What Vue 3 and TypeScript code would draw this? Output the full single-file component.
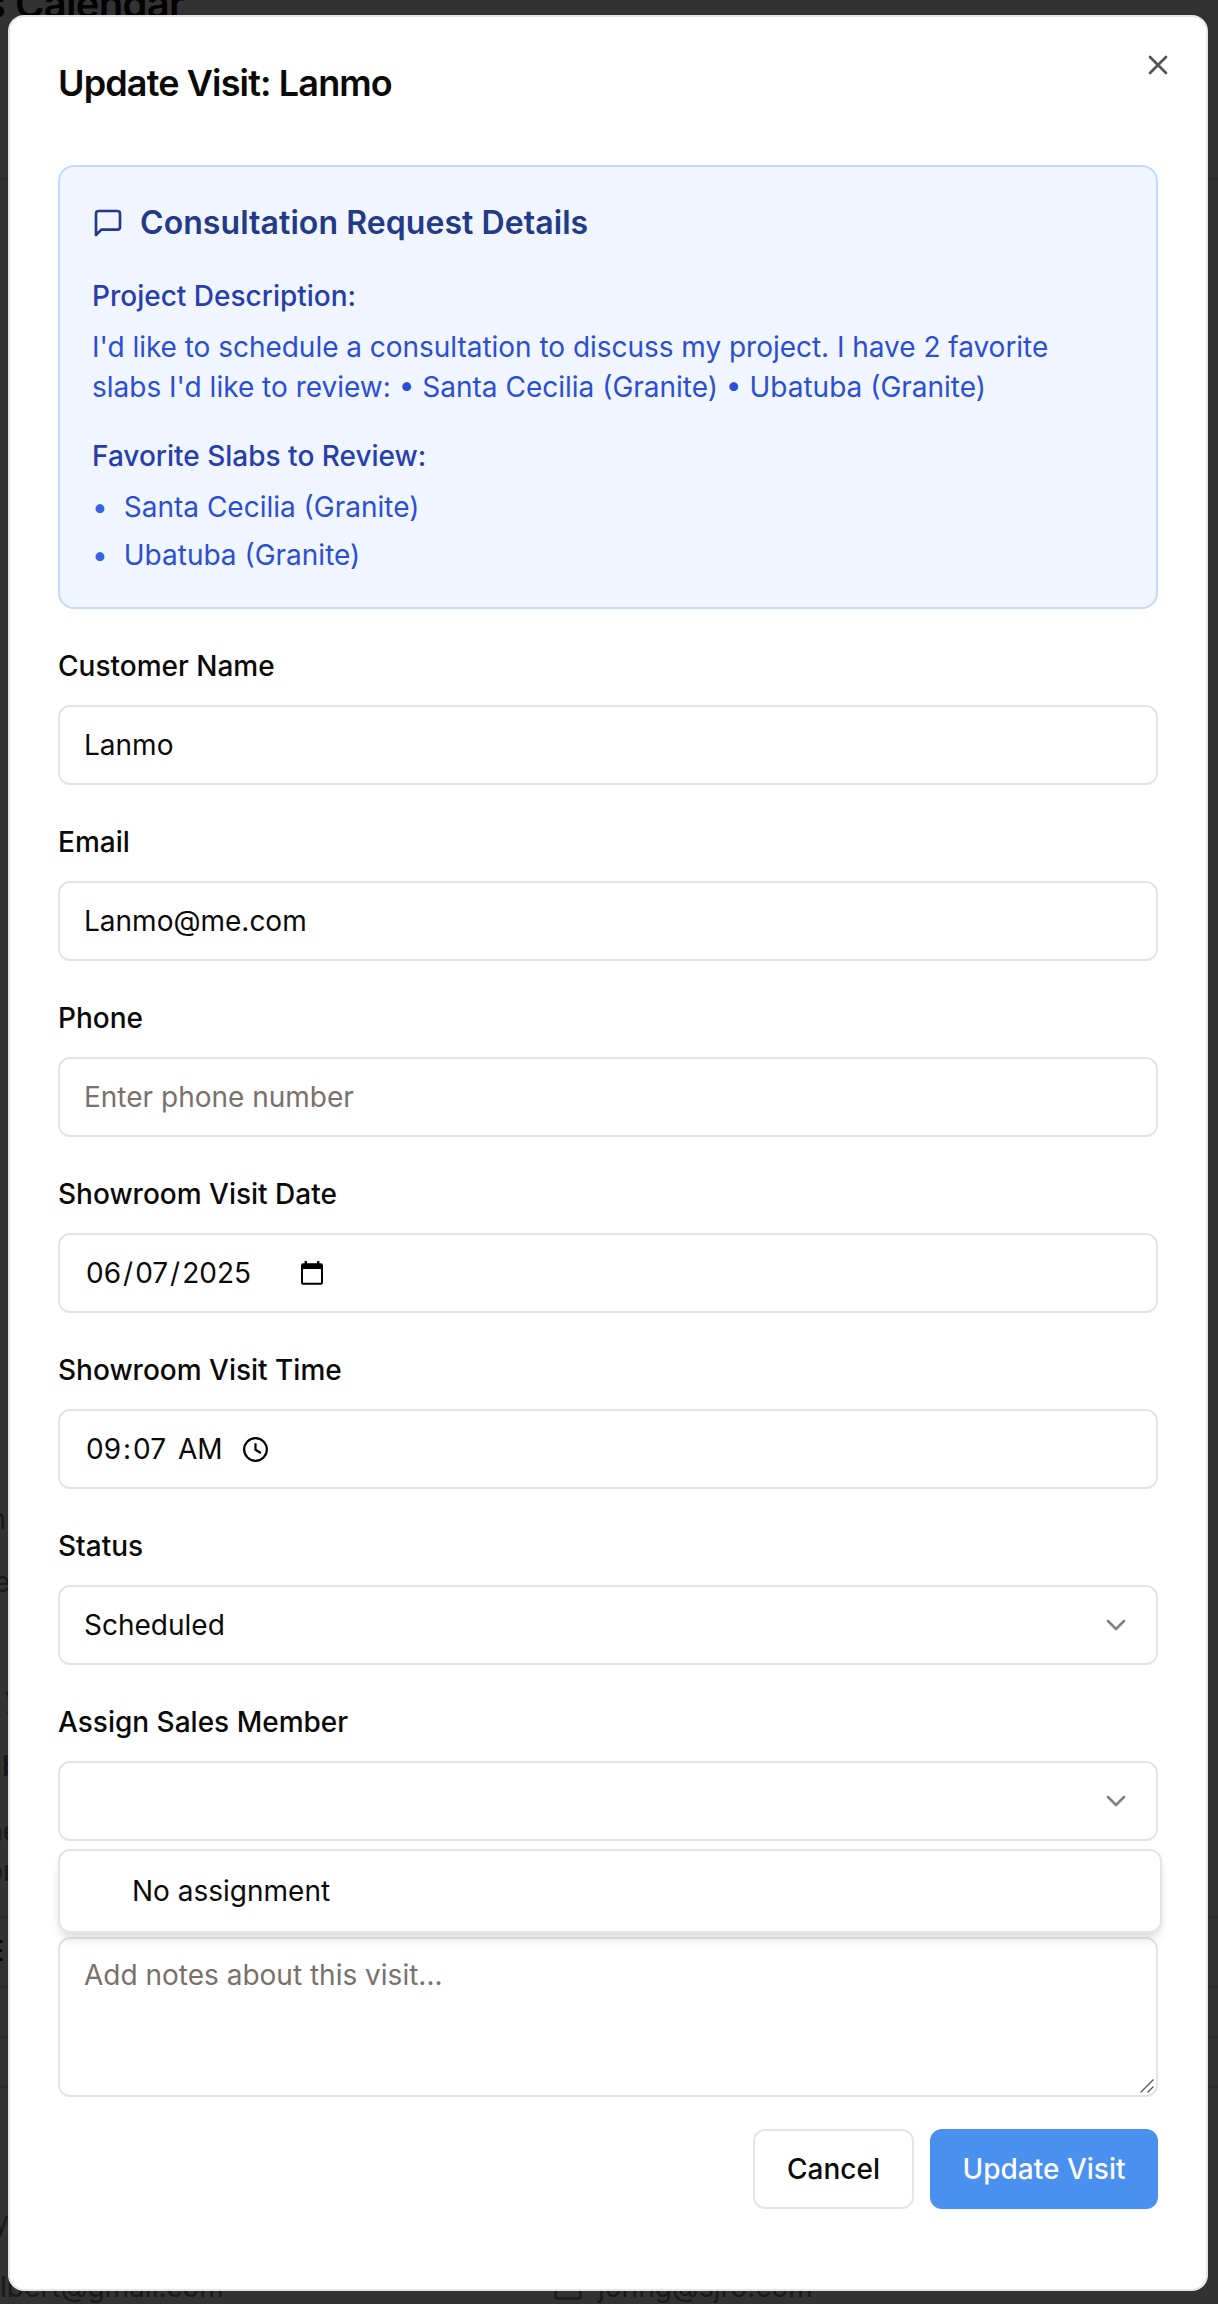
<script setup lang="ts">
interface Field {
  label: string
  value?: string
  parts?: string[]
  placeholder?: string
  kind: 'text' | 'date' | 'time' | 'select'
}

interface Fragment {
  text: string
  right?: number
  left?: number
  baseline: number
  size: number
  weight: number
  color: string
}

const fields: Field[] = [
  { label: 'Customer Name', value: 'Lanmo', kind: 'text' },
  { label: 'Email', value: 'Lanmo@me.com', kind: 'text' },
  { label: 'Phone', placeholder: 'Enter phone number', kind: 'text' },
  { label: 'Showroom Visit Date', parts: ['06', '/', '07', '/', '2025'], kind: 'date' },
  { label: 'Showroom Visit Time', parts: ['09', ':', '07', ' ', 'AM'], kind: 'time' },
  { label: 'Status', value: 'Scheduled', kind: 'select' },
]

const slabs: string[] = ['Santa Cecilia (Granite)', 'Ubatuba (Granite)']

// Pieces of the dimmed page that stay visible around the dialog
const fragments: Fragment[] = [
  { text: 's', right: 1213, baseline: 19, size: 40, weight: 600, color: '#020202' },
  { text: 'Calendar', left: 15, baseline: 19, size: 40, weight: 600, color: '#020202' },
  { text: 'n', right: 1212, baseline: 1530, size: 28, weight: 400, color: '#16181c' },
  { text: 'e', left: -6, baseline: 1593, size: 28, weight: 400, color: '#16181c' },
  { text: 'y', left: 5, baseline: 1709, size: 28, weight: 500, color: '#16181c' },
  { text: 'b', left: 2, baseline: 1777, size: 28, weight: 600, color: '#16181c' },
  { text: 'ne', left: -14, baseline: 1842, size: 28, weight: 500, color: '#16181c' },
  { text: 'or', left: -14, baseline: 1882, size: 28, weight: 500, color: '#16181c' },
  { text: 'E', left: -13, baseline: 1962, size: 28, weight: 600, color: '#020202' },
  { text: 'y', right: 1209, baseline: 2233, size: 28, weight: 400, color: '#16181c' },
  { text: 'lbert@gmail.com', left: 0, baseline: 2298, size: 28, weight: 400, color: '#16181c' },
  { text: 'johng@sjro.com', left: 598, baseline: 2298, size: 28, weight: 400, color: '#16181c' },
]

const rules: number[] = [178, 1916, 1986, 2036, 2086]
</script>

<template>
  <div class="page">
    <div class="backdrop" aria-hidden="true">
      <i v-for="y in rules" :key="y" class="rule" :style="{ top: y + 'px' }"></i>
      <span
        v-for="(f, i) in fragments"
        :key="i"
        class="fragment"
        :style="{
          left: f.left !== undefined ? f.left + 'px' : 'auto',
          right: f.right !== undefined ? f.right + 'px' : 'auto',
          top: f.baseline - f.size + 'px',
          fontSize: f.size + 'px',
          fontWeight: f.weight,
          letterSpacing: f.size > 30 ? '-0.7px' : '0',
          color: f.color,
        }"
      >{{ f.text }}</span>
      <i class="envelope"></i>
    </div>

    <main class="dialog">
      <button class="close" aria-label="Close">
        <svg viewBox="0 0 24 24" class="icon"><path d="M18 6 6 18M6 6l12 12" /></svg>
      </button>
      <h2 class="title">Update Visit: Lanmo</h2>

      <section class="panel">
        <h3 class="panel-title">
          <svg viewBox="0 0 24 24" class="icon">
            <path d="M21 15a2 2 0 0 1-2 2H7l-4 4V5a2 2 0 0 1 2-2h14a2 2 0 0 1 2 2z" />
          </svg>
          <span class="panel-title-text">Consultation Request Details</span>
        </h3>
        <h4 class="sub">Project Description:</h4>
        <p class="desc">
          I'd like to schedule a consultation to discuss my project. I have 2 favorite<br />slabs I'd like to
          review: • Santa Cecilia (Granite) • Ubatuba (Granite)
        </p>
        <h4 class="sub second">Favorite Slabs to Review:</h4>
        <ul class="slabs">
          <li v-for="s in slabs" :key="s"><span class="dot">•</span><span>{{ s }}</span></li>
        </ul>
      </section>

      <div v-for="f in fields" :key="f.label" class="field">
        <div class="label">{{ f.label }}</div>
        <div class="control" :class="f.kind">
          <span v-if="f.parts" class="parts"><span v-for="(p, i) in f.parts" :key="i" :class="i % 2 ? 'sep' : 'part'">{{ p }}</span></span>
          <span v-else-if="f.value" class="value">{{ f.value }}</span>
          <span v-else class="placeholder">{{ f.placeholder }}</span>
          <svg v-if="f.kind === 'date'" class="cal" viewBox="0 0 22 24">
            <path fill-rule="evenodd" d="M3.600 0h2.300v2.200h10.200V0h2.300v2.200h1.400A2.200 2.200 0 0 1 22 4.400v17.200a2.200 2.200 0 0 1-2.200 2.200H2.200A2.200 2.200 0 0 1 0 21.600V4.400A2.200 2.200 0 0 1 2.200 2.200h1.400zM2 8v13.800h18V8z" />
          </svg>
          <svg v-if="f.kind === 'time'" class="clock" viewBox="0 0 24 24">
            <circle cx="12" cy="12" r="10.900" /><path d="M12 6v6.300l5.200 3.100" />
          </svg>
          <svg v-if="f.kind === 'select'" class="icon chevron" viewBox="0 0 24 24"><path d="m6 9 6 6 6-6" /></svg>
        </div>
      </div>

      <div class="field">
        <div class="label">Assign Sales Member</div>
        <div class="control select">
          <span class="value"></span>
          <svg class="icon chevron" viewBox="0 0 24 24"><path d="m6 9 6 6 6-6" /></svg>
          <div class="menu">No assignment</div>
        </div>
      </div>

      <div class="notes">
        <span class="placeholder">Add notes about this visit...</span>
        <svg class="grip" viewBox="0 0 14 14"><path d="M.5 13.500 13.500.500M7.500 13.500l6-6" /></svg>
      </div>

      <footer class="actions">
        <button class="btn cancel">Cancel</button>
        <button class="btn primary">Update Visit</button>
      </footer>
    </main>
  </div>
</template>

<style>
html,
body {
  margin: 0;
  background: #323232;
}
</style>

<style scoped>
.page,
.page * {
  box-sizing: border-box;
}
.page {
  position: relative;
  width: 1218px;
  height: 2304px;
  padding: 15px 10px 13px 8px;
  overflow: hidden;
  background: #323232;
  color: #0c0a09;
  font-family: Inter, 'Liberation Sans', sans-serif;
  font-size: 28px;
  line-height: 40px;
}
.backdrop {
  position: absolute;
  inset: 0;
}
.fragment {
  position: absolute;
  line-height: 1.27;
  white-space: nowrap;
}
.rule {
  position: absolute;
  left: 0;
  right: 0;
  height: 2px;
  background: #2b2b2b;
}
.envelope {
  position: absolute;
  left: 554px;
  top: 2276px;
  width: 28px;
  height: 24px;
  border: 3px solid #1c1c1e;
  border-radius: 4px;
}
.dialog {
  position: relative;
  height: 2276px;
  padding: 48px;
  border: 2px solid #e5e5e5;
  border-radius: 16px;
  background: #fff;
}
.icon {
  width: 32px;
  height: 32px;
  flex: none;
  display: block;
  fill: none;
  stroke: currentColor;
  stroke-width: 2;
  stroke-linecap: round;
  stroke-linejoin: round;
}
.close {
  position: absolute;
  top: 32px;
  right: 32px;
  padding: 0;
  border: 0;
  background: none;
  color: #0c0a09;
  opacity: 0.7;
}
.title {
  margin: 0 0 64px;
  font-size: 36px;
  line-height: 36px;
  font-weight: 600;
  letter-spacing: -0.86px;
}
.panel {
  height: 444px;
  padding: 32px;
  border: 2px solid #c3dafc;
  border-radius: 16px;
  background: #f1f5fe;
}
.panel-title {
  display: flex;
  align-items: center;
  gap: 16px;
  height: 48px;
  margin: 0 0 29px;
  color: #233a87;
  font-size: 32px;
  font-weight: 600;
  letter-spacing: 0.07px;
}
.sub {
  margin: 0 0 11px;
  color: #263fac;
  font-size: 28px;
  font-weight: 500;
}
.second {
  margin-top: 29px;
}
.desc {
  margin: 0;
  color: #2b4fd4;
  white-space: nowrap;
}
.desc::first-line {
  letter-spacing: -0.03px;
}
.slabs {
  display: flex;
  flex-direction: column;
  gap: 8px;
  margin: 0;
  padding: 0;
  list-style: none;
  color: #2b4fd4;
}
.slabs li {
  display: flex;
  gap: 16px;
}
.dot {
  color: #3662e3;
}
.field {
  padding-top: 37px;
}
.label {
  height: 40px;
  margin-bottom: 19px;
  font-weight: 500;
}
.control {
  position: relative;
  display: flex;
  align-items: center;
  height: 80px;
  padding: 0 24px;
  border: 2px solid #e5e5e5;
  border-radius: 12px;
}
.parts {
  display: flex;
  white-space: pre;
}
.part {
  padding: 0 2px;
}
.date .parts {
  width: 217px;
}
.time .parts {
  width: 159px;
}
.select {
  justify-content: space-between;
}
.placeholder {
  color: #78716c;
}
.cal {
  width: 22px;
  height: 24px;
}
.clock {
  width: 25px;
  height: 25px;
  fill: none;
  stroke: #000;
  stroke-width: 2.1;
}
.chevron {
  opacity: 0.5;
}
.menu {
  position: absolute;
  z-index: 2;
  top: 86px;
  left: -2px;
  width: 1104px;
  height: 84px;
  padding: 20px 72px;
  border: 2px solid #e5e5e5;
  border-radius: 12px;
  background: #fff;
  box-shadow: 0 8px 12px -2px rgba(0, 0, 0, 0.1), 0 4px 8px -4px rgba(0, 0, 0, 0.1);
}
.notes {
  position: relative;
  height: 160px;
  margin-top: 96px;
  padding: 16px 24px;
  border: 2px solid #e5e5e5;
  border-radius: 12px;
}
.grip {
  position: absolute;
  right: 2px;
  bottom: 2px;
  width: 14px;
  height: 14px;
  fill: none;
  stroke: #555;
  stroke-width: 1.3;
}
.actions {
  display: flex;
  justify-content: flex-end;
  gap: 16px;
  margin-top: 32px;
}
.btn {
  height: 80px;
  padding: 0;
  border-radius: 12px;
  font: inherit;
  font-weight: 500;
}
.cancel {
  width: 161px;
  border: 2px solid #e5e5e5;
  background: #fff;
  color: #0c0a09;
}
.primary {
  width: 228px;
  border: 0;
  background: #4a90ee;
  color: #fafaf9;
}
</style>
